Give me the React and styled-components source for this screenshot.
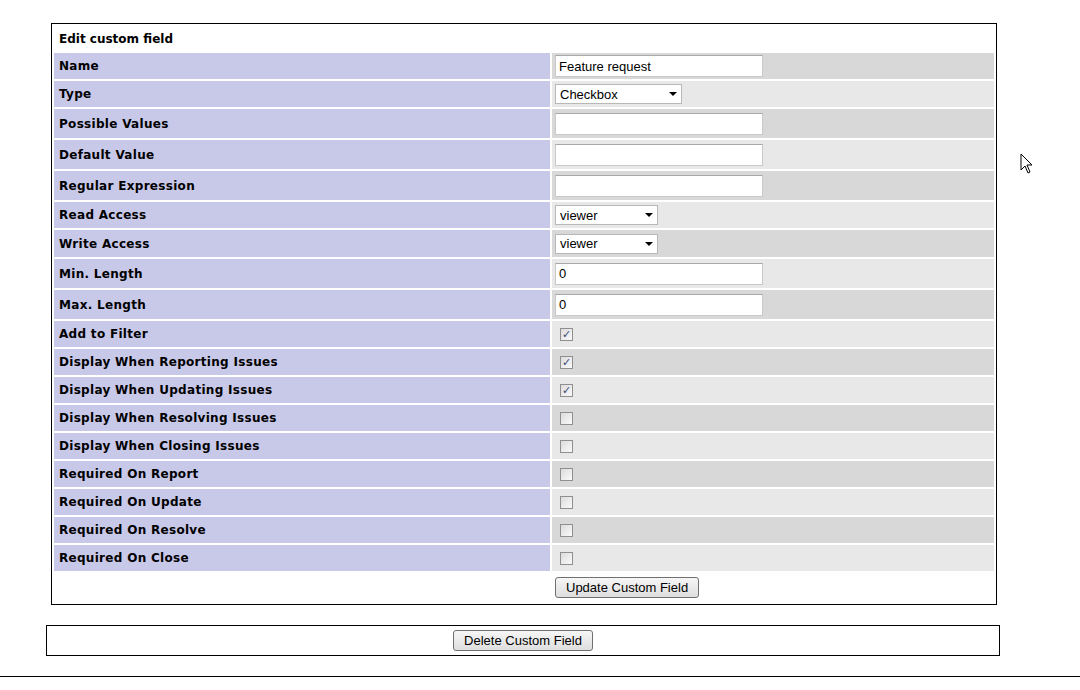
import React from "react";
import styled, { createGlobalStyle } from "styled-components";

const Global = createGlobalStyle`
  body { margin: 0; background: #fff; font-family: "DejaVu Sans", Verdana, sans-serif; }
`;

const Page = styled.div`
  position: relative;
  width: 1080px;
  height: 690px;
  padding-top: 23px;
  box-sizing: border-box;
`;

const Form = styled.table`
  width: 946px;
  margin-left: 51px;
  border: 1px solid #000;
  border-spacing: 2px;
  border-collapse: separate;
  padding: 0;
`;

const Title = styled.td`
  height: 25px;
  padding: 0 5px;
  font-size: 12px;
  font-weight: bold;
  color: #000;
`;

const Label = styled.td`
  width: 486px;
  height: ${(p) => p.h}px;
  padding: 0 5px;
  background: #c8c8e8;
  font-size: 12px;
  font-weight: bold;
  letter-spacing: 0.3px;
  color: #000;
`;

const Value = styled.td`
  padding: 0 0 0 3px;
  background: ${(p) => (p.odd ? "#d8d8d8" : "#e8e8e8")};
`;

const Input = styled.input`
  width: 208px;
  height: 22px;
  box-sizing: border-box;
  border: 1px solid #c8c8c8;
  border-top-color: #a8a8a8;
  font: 13px "Liberation Sans", Arial, sans-serif;
  padding: 0 3px;
  display: block;
`;

const Select = styled.div`
  width: ${(p) => p.w}px;
  height: 20px;
  box-sizing: border-box;
  background: #fff;
  border: 1px solid #b8b8b8;
  font: 13px "Liberation Sans", Arial, sans-serif;
  padding: 0 4px;
  display: flex;
  align-items: center;
  justify-content: space-between;
  &:after {
    content: "";
    border-left: 4px solid transparent;
    border-right: 4px solid transparent;
    border-top: 4px solid #000;
  }
`;

const Check = styled.span`
  display: block;
  width: 11px;
  height: 11px;
  margin-left: 5px;
  border: 1px solid #8f8f8f;
  background: linear-gradient(135deg, #dcdcdc, #fafafa);
  position: relative;
  font-size: 11px;
  line-height: 11px;
  text-align: center;
  color: #3a4a7a;
  font-family: "DejaVu Sans", sans-serif;
`;

const Button = styled.button`
  height: 21px;
  padding: 0 10px;
  font: 13px "Liberation Sans", Arial, sans-serif;
  color: #000;
  border: 1px solid #707070;
  border-radius: 3px;
  background: linear-gradient(#f6f6f6, #dedede);
`;

const ButtonCell = styled.td`
  height: 29px;
  padding: 0 0 0 3px;
`;

const DeleteBox = styled.div`
  width: 954px;
  height: 31px;
  margin: 20px 0 0 46px;
  box-sizing: border-box;
  border: 1px solid #000;
  display: flex;
  align-items: center;
  justify-content: center;
`;

const Rule = styled.div`
  margin-top: 20px;
  border-top: 1px solid #000;
`;

const Cursor = styled.svg`
  position: absolute;
  left: 1020px;
  top: 153px;
`;

const rows = [
  ["Name", 26, "input", "Feature request"],
  ["Type", 26, "select", "Checkbox", 127],
  ["Possible Values", 29, "input", ""],
  ["Default Value", 29, "input", ""],
  ["Regular Expression", 29, "input", ""],
  ["Read Access", 26, "select", "viewer", 103],
  ["Write Access", 27, "select", "viewer", 103],
  ["Min. Length", 29, "input", "0"],
  ["Max. Length", 29, "input", "0"],
  ["Add to Filter", 26, "check", true],
  ["Display When Reporting Issues", 26, "check", true],
  ["Display When Updating Issues", 26, "check", true],
  ["Display When Resolving Issues", 26, "check", false],
  ["Display When Closing Issues", 26, "check", false],
  ["Required On Report", 26, "check", false],
  ["Required On Update", 26, "check", false],
  ["Required On Resolve", 26, "check", false],
  ["Required On Close", 26, "check", false],
];

const App = () => (
  <Page>
    <Global />
    <Form>
      <tbody>
        <tr>
          <Title colSpan={2}>Edit custom field</Title>
        </tr>
        {rows.map(([label, h, kind, v, w], i) => (
          <tr key={label}>
            <Label h={h}>{label}</Label>
            <Value odd={i % 2 === 0}>
              {kind === "input" && <Input defaultValue={v} />}
              {kind === "select" && <Select w={w}>{v}</Select>}
              {kind === "check" && <Check>{v ? "✓" : ""}</Check>}
            </Value>
          </tr>
        ))}
        <tr>
          <td />
          <ButtonCell>
            <Button>Update Custom Field</Button>
          </ButtonCell>
        </tr>
      </tbody>
    </Form>
    <DeleteBox>
      <Button>Delete Custom Field</Button>
    </DeleteBox>
    <Rule />
    <Cursor width="14" height="22" viewBox="0 0 14 22">
      <path d="M1 1 L1 17 L5 13 L8 20 L10 19 L7 12 L12 12 Z" fill="#fff" stroke="#000" strokeWidth="1" />
    </Cursor>
  </Page>
);

export default App;
